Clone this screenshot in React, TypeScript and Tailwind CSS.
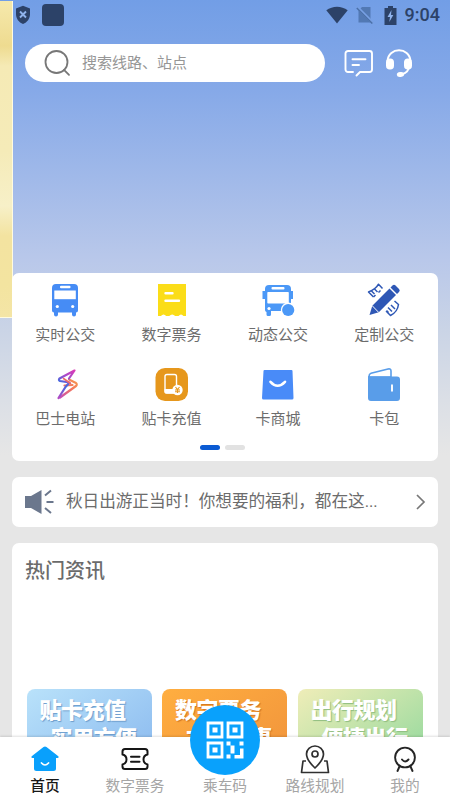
import React from "react";

const sans = "font-['Roboto','Noto_Sans_CJK_SC',sans-serif]";

function StatusBar() {
  return (
    <div className="flex h-[30px] items-center pl-[15px] pr-[10px] text-[#2c4268]">
      <svg width="16" height="20" viewBox="0 0 16 20">
        <path d="M8 .8 15 3.5V9c0 4.800-2.800 8.300-7 10-4.200-1.700-7-5.200-7-10V3.500Z" fill="currentColor" />
        <path d="m5 6.500 6 6m0-6-6 6" stroke="#8fb3ec" strokeWidth="1.900" />
      </svg>
      <div className="ml-[11px] h-[22px] w-[22px] rounded-[4px] bg-[#2c4268]" />
      <div className="ml-auto flex items-center">
        <svg width="22" height="18" viewBox="0 0 22 18">
          <path d="M.3 4.300C6.600-.6 15.400-.6 21.700 4.300L11 17.500Z" fill="currentColor" />
        </svg>
        <svg className="ml-[8px]" width="18" height="18" viewBox="0 0 18 18">
          <path d="M6 1H14.500v15.500H2.500V4.500Z" fill="#5279b4" />
          <path d="m1 1 16 16" stroke="#77a0e4" strokeWidth="3" />
          <path d="m.8 2 15.500 15.500" stroke="#4b70a8" strokeWidth="1.500" />
        </svg>
        <svg className="ml-[10px]" width="13" height="19" viewBox="0 0 13 19">
          <path d="M4 0h5v2h3.500v17H.5V2H4Z" fill="currentColor" />
          <path d="M7.500 4 3.500 11H6l-.7 5 4-7H7Z" fill="#8fb3ec" />
        </svg>
        <span className="ml-[8px] text-[18px] font-medium leading-[30px]">9:04</span>
      </div>
    </div>
  );
}

function SearchRow() {
  return (
    <div className="mt-[14px] flex items-center pl-[25px]">
      <div className="flex h-[38px] w-[300px] items-center rounded-full bg-white pl-[19px]">
        <svg width="27" height="27" viewBox="0 0 27 27" fill="none" stroke="#777" strokeWidth="1.800">
          <circle cx="12.500" cy="12" r="11" />
          <path d="m20 19.800 5 5" strokeLinecap="round" />
        </svg>
        <span className="ml-[11px] text-[15px] leading-[20px] text-[#969696]">搜索线路、站点</span>
      </div>
      <svg className="ml-[19px]" width="30" height="28" viewBox="0 0 30 28" fill="none" stroke="#fff" strokeWidth="1.900" strokeLinecap="round" strokeLinejoin="round">
        <path d="M9 23H4a2.500 2.500 0 0 1-2.500-2.500v-16A2.500 2.500 0 0 1 4 2h21.500A2.500 2.500 0 0 1 28 4.500v16a2.500 2.500 0 0 1-2.500 2.500h-9.500L12.500 26.500M8.500 10.300h13M8.500 16h6.500" />
      </svg>
      <svg className="ml-[11px]" width="28" height="29" viewBox="0 0 28 29">
        <path d="M2.500 12C3.500-2.200 24.500-2.200 25.500 12M24 17c0 5-3.500 7.500-8 8.500" fill="none" stroke="#fff" strokeWidth="2" />
        <rect x="1" y="9.500" width="8" height="11" rx="3.800" fill="#fff" />
        <rect x="19" y="9.500" width="8" height="11" rx="3.800" fill="#fff" />
        <ellipse cx="15.500" cy="25.500" rx="3.700" ry="2.400" transform="rotate(-8 15.500 25.500)" fill="#fff" />
      </svg>
    </div>
  );
}

const BusIcon = () => (
  <svg width="34" height="34" viewBox="0 0 34 34" fill="#468cf5">
    <path d="M8 1h18a4 4 0 0 1 4 4v22.500a2 2 0 0 1-2 2v2a2 2 0 0 1-4 0v-2H10v2a2 2 0 0 1-4 0v-2a2 2 0 0 1-2-2V5a4 4 0 0 1 4-4Z" />
    <rect x="12" y="2.800" width="10.500" height="2.500" rx="1" fill="#fff" />
    <rect x="6.300" y="7.500" width="21.500" height="8.700" fill="#fff" />
    <circle cx="9.300" cy="23.500" r="1.600" fill="#fff" />
    <circle cx="24.700" cy="23.500" r="1.600" fill="#fff" />
  </svg>
);

const TicketIcon = () => (
  <svg width="34" height="34" viewBox="0 0 34 34">
    <path d="M3 1h28v32h-2.500q-2.500-3-5 0h-3.300q-3-3-6 0h-3q-2.700-3-5.300 0H3Z" fill="#fbdd18" />
    <path d="M10.500 10.300h7M10.500 17.800h13.500" stroke="#fff" strokeWidth="2.400" strokeLinecap="round" />
  </svg>
);

const LiveBusIcon = () => (
  <svg width="34" height="34" viewBox="0 0 34 34" fill="#4b98f7">
    <path d="M8 2h18q4 0 4 4v2h2v8h-2v12H10v3.500a1.500 1.500 0 0 1-1.500 1.500H7a1.500 1.500 0 0 1-1.500-1.500V29A2 2 0 0 1 4 27V16H1.500V8H4V6q0-4 4-4Z" />
    <rect x="10.500" y="4" width="13" height="2.500" rx="1" fill="#fff" />
    <rect x="6.300" y="9" width="21.500" height="11.500" rx=".8" fill="#fff" />
    <circle cx="8" cy="25.500" r="1.600" fill="#fff" />
    <circle cx="27.200" cy="27" r="7.400" fill="#fff" />
    <circle cx="27.200" cy="27" r="6.100" />
  </svg>
);

const PencilIcon = () => (
  <svg width="34" height="34" viewBox="0 0 34 34" fill="none" stroke="#2e57b5" strokeWidth="1.500" strokeLinejoin="round">
    <path d="M6.500 14 1.500 9Q9 6 11.500 1.200L15.500 5.500M7 5.500l3.500 3.500M4.500 8l3 3" />
    <path d="M6.500 14l2-2M11.500 9.500l2-2" />
    <path d="m27.500 18 4 3.500q-1 7.500-8 11L19 28M21 24.500l4 4M24 22l4 4M21.500 29.500l-2-2" />
    <path d="M22.500 5.500 29 12 11.800 29.200 2.500 32l2.800-9.300Z" fill="#2e57b5" stroke="none" />
    <path d="m23.500 4.500 2-2Q27 1 28.500 2.500l3.500 3.500q1.500 1.500 0 3l-2 2Z" fill="#2e57b5" stroke="none" />
    <path d="m5 22.500 6.800 7" stroke="#fff" strokeWidth="1" />
  </svg>
);

const BoltIcon = () => (
  <svg width="34" height="34" viewBox="0 0 34 34" fill="none" strokeWidth="2.200" strokeLinejoin="round" strokeLinecap="round">
    <defs>
      <linearGradient id="bolt" gradientUnits="userSpaceOnUse" x1="26" y1="3" x2="11" y2="31">
        <stop offset="0" stopColor="#dc3ab5" /><stop offset=".3" stopColor="#a34ccc" /><stop offset=".55" stopColor="#3f6ae0" /><stop offset="1" stopColor="#b14ac4" />
      </linearGradient>
      <linearGradient id="spark" gradientUnits="userSpaceOnUse" x1="13" y1="30" x2="28" y2="15">
        <stop stopColor="#c750b4" /><stop offset=".6" stopColor="#f2745f" /><stop offset="1" stopColor="#f69151" />
      </linearGradient>
    </defs>
    <path d="m16.500 18.500 8-.5M21 12.500l7 3.500q1.500 1.300 0 3L12 30.500" stroke="url(#spark)" />
    <path d="M21 11.500 26.500 3.500 11.500 11.500q-1.300 1.800.5 2.500l9.500 1.500-4 4.500-7 11" stroke="url(#bolt)" />
    <path d="m15.500 11.500 7 5" stroke="#ec6a6c" strokeWidth="1.600" />
  </svg>
);

const TopUpIcon = () => (
  <svg width="34" height="34" viewBox="0 0 34 34">
    <rect x=".5" y="1" width="32.500" height="33" rx="9.500" fill="#e6971c" />
    <rect x="10" y="7.500" width="11.500" height="18.500" rx="2" fill="none" stroke="#fff" strokeWidth="1.400" />
    <path d="M9.500 22H21V26.500H11q-1.500 0-1.500-1.500Z" fill="#fff" />
    <circle cx="22.500" cy="23" r="5.200" fill="#fff" />
    <path d="m20.500 20 2 2.500 2-2.500M20 23h5m-5 1.700h5M22.500 22.500v3.500" fill="none" stroke="#e6971c" strokeWidth="1.100" />
  </svg>
);

const BagIcon = () => (
  <svg width="34" height="34" viewBox="0 0 34 34">
    <path d="M3.500 3h27q1 0 1 1l1 27q0 1.500-1.500 1.500H2.500Q1 32.500 1 31L2.500 4q0-1 1-1Z" fill="#498bf8" />
    <path d="M9.500 14.800q7 7.800 14.500 0" fill="none" stroke="#fff" strokeWidth="2.600" strokeLinecap="round" />
  </svg>
);

const WalletIcon = () => (
  <svg width="34" height="34" viewBox="0 0 34 34">
    <path d="M2 12V9.500Q2 7 4 6.300L21 2q3-.7 3 2v6H2Z" fill="#fff" stroke="#599de9" strokeWidth="1.600" />
    <path d="M1 9q1 .5 3 .5h26q3 0 3 3V31q0 3-3 3H4q-3 0-3-3Z" fill="#599de9" />
    <path d="M25 18.300v5.500" stroke="#fff" strokeWidth="1.900" strokeLinecap="round" />
  </svg>
);

const services = [
  { label: "实时公交", icon: <BusIcon /> },
  { label: "数字票务", icon: <TicketIcon /> },
  { label: "动态公交", icon: <LiveBusIcon /> },
  { label: "定制公交", icon: <PencilIcon /> },
  { label: "巴士电站", icon: <BoltIcon /> },
  { label: "贴卡充值", icon: <TopUpIcon /> },
  { label: "卡商城", icon: <BagIcon /> },
  { label: "卡包", icon: <WalletIcon /> },
];

function Services() {
  return (
    <section className="h-[188px] rounded-[7px] bg-white pt-[10px]">
      <div className="grid grid-cols-4 gap-y-[14px]">
        {services.map((s) => (
          <div key={s.label} className="flex h-[70px] flex-col items-center">
            {s.icon}
            <span className="mt-[7px] text-[15px] leading-[22px] text-[#6c6c6c]">{s.label}</span>
          </div>
        ))}
      </div>
      <div className="mt-[8px] flex justify-center gap-[5px] pr-[5px]">
        <i className="h-[5px] w-[20px] rounded-full bg-[#0b5bd3]" />
        <i className="h-[5px] w-[20px] rounded-full bg-[#e2e2e2]" />
      </div>
    </section>
  );
}

function Notice() {
  return (
    <section className="mt-[16px] flex h-[50px] items-center rounded-[7px] bg-white pl-[12px] pr-[12px]">
      <svg width="30" height="26" viewBox="0 0 30 26">
        <path d="M1 7h6l10.500-6v24L7 19H1Z" fill="#6b778d" />
        <path d="m21 6.500 6-5M22.500 13h7M21 19l6 5" stroke="#6b778d" strokeWidth="2" />
      </svg>
      <span className="ml-[12px] whitespace-nowrap text-[16.650px] leading-[24px] tracking-[-0.050px] text-[#6c6c6c]">秋日出游正当时！你想要的福利，都在这...</span>
      <svg className="ml-auto" width="11" height="16" viewBox="0 0 11 16" fill="none" stroke="#777" strokeWidth="1.700">
        <path d="m2 1 7 7-7 7" />
      </svg>
    </section>
  );
}

const banners = [
  { title: "贴卡充值", sub: "实用方便", tone: "from-[#b9e2fa] to-[#86b5ed] [text-shadow:1px_1px_1px_#6d9dcc]" },
  { title: "数字票务", sub: "方便实惠", tone: "from-[#ffae40] to-[#ef913b] [text-shadow:1px_1px_1px_#d27824]" },
  { title: "出行规划", sub: "便捷出行", tone: "from-[#efedb8] to-[#86d69a] [text-shadow:1px_1px_1px_#8fbd80]" },
];

function News() {
  return (
    <section className="mt-[16px] h-[257px] overflow-hidden rounded-t-[7px] bg-white">
      <h2 className="pl-[13px] pt-[13px] text-[20px] font-medium leading-[30px] text-[#6b6b6b]">热门资讯</h2>
      <div className="mt-[103px] flex gap-[10.500px] pl-[14.500px]">
        {banners.map((b) => (
          <div key={b.title} className={"h-[90px] w-[125px] shrink-0 rounded-[8px] bg-gradient-to-br pl-[13px] pt-[8px] text-[22px] font-black leading-[28px] text-white " + b.tone}>
            <div className="whitespace-nowrap tracking-[-0.500px]">{b.title}</div>
            <div className="whitespace-nowrap pl-[11px] tracking-[-0.500px]">{b.sub}</div>
          </div>
        ))}
      </div>
    </section>
  );
}

const HomeIcon = () => (
  <svg width="30" height="28" viewBox="0 0 30 28">
    <path d="M13.500 1q1.500-1.200 3 0L28 10q1.500 1.600-.6 2H26v10.500q0 2.500-2.500 2.500h-17Q4 25 4 22.500V12H2.600Q.5 11.600 2 10Z" fill="#09a0fc" />
    <path d="M11.500 17q3.500 4 7 0" fill="none" stroke="#fff" strokeWidth="1.700" strokeLinecap="round" />
  </svg>
);

const CouponIcon = () => (
  <svg width="30" height="28" viewBox="0 0 30 28" fill="none" stroke="#161616" strokeWidth="2" strokeLinejoin="round" strokeLinecap="round">
    <path d="M5 3h20q2.500 0 2.500 2.500v3q-4 1-4 5t4 5v2q0 2.500-2.500 2.500H5Q2.500 23 2.500 20.500v-2q4-1 4-5t-4-5v-3Q2.500 3 5 3ZM11 10.800h8.500M11 15.800h8.500" />
  </svg>
);

const RouteIcon = () => (
  <svg width="30" height="30" viewBox="0 0 30 30" fill="none" stroke="#303030" strokeWidth="1.700" strokeLinejoin="round">
    <path d="M15 23q-8.500-8-8.500-14a8.500 8 0 0 1 17 0Q23.500 15 15 23Z" />
    <circle cx="15" cy="9" r="3" />
    <path d="M6 16H3L1.500 27.500h27L27 16h-3" />
  </svg>
);

const ProfileIcon = () => (
  <svg width="30" height="28" viewBox="0 0 30 28" fill="none" stroke="#252525" strokeWidth="1.900" strokeLinecap="round">
    <circle cx="15" cy="11.500" r="9.900" />
    <path d="M12 13.500q3 4 6.500 0M9.500 20.500 7.500 25M20.500 20.500l2 4.500" />
  </svg>
);

function QrCode() {
  return (
    <svg width="38" height="38" viewBox="0 0 38 38" fill="none" stroke="#fff" strokeWidth="2.800">
      <path d="M2 2h14v14H2ZM22 2h14v14H22ZM2 22h14v14H2Z" />
      <path d="M6.500 6.500h5v5h-5ZM26.500 6.500h5v5h-5ZM6.500 26.500h5v5h-5Z" fill="#fff" stroke="none" />
      <path d="M20.500 20.500h4v4h-4ZM33.500 20.500h4v4h-4ZM20.500 33.500h4v4h-4ZM24.500 24.500h4v8h-4ZM34 27.500h3.500v10h-9V34H34Z" fill="#fff" stroke="none" />
    </svg>
  );
}

const tabs = [
  { label: "首页", icon: <HomeIcon />, color: "text-[#171717] font-medium" },
  { label: "数字票务", icon: <CouponIcon />, color: "text-[#a5a5a5]" },
  { label: "乘车码", icon: null, color: "text-[#a5a5a5]" },
  { label: "路线规划", icon: <RouteIcon />, color: "text-[#a5a5a5]" },
  { label: "我的", icon: <ProfileIcon />, color: "text-[#a5a5a5]" },
];

function TabBar() {
  return (
    <nav className="absolute inset-x-0 bottom-0 h-[63px] bg-white shadow-[0_-1px_2px_rgba(0,0,0,0.12)]">
      <div className="absolute left-[190px] top-[-32px] flex h-[70px] w-[70px] items-center justify-center rounded-full bg-[#09a1fc]">
        <QrCode />
      </div>
      <div className="grid h-full grid-cols-5">
        {tabs.map((t) => (
          <div key={t.label} className="flex flex-col items-center pt-[7px]">
            <div className="flex h-[31px] items-center">{t.icon}</div>
            <span className={"relative text-[14.700px] leading-[22px] " + t.color}>{t.label}</span>
          </div>
        ))}
      </div>
    </nav>
  );
}

export default function App() {
  return (
    <div className={"relative h-[800px] w-[450px] overflow-hidden bg-[#e6e6e6] bg-[linear-gradient(180deg,#729ee6_0px,#86a9e8_90px,#b9c8ea_260px,#cad4e6_330px,#dbdfe6_400px,#e6e6e6_455px)] " + sans}>
      <div className="absolute left-0 top-[1px] h-[317px] w-[13px] border-r border-b border-[#fffbe0] bg-[linear-gradient(180deg,#f6e9ac_0px,#eedb90_45px,#f5eab5_65px,#f5ebb8_150px,#f7f0c8_205px,#f3e3a0_235px,#f3e4a0_285px,#f4e5a6_317px)]" />
      <StatusBar />
      <SearchRow />
      <main className="relative ml-[12px] mr-[12.500px] mt-[190.500px]">
        <Services />
        <Notice />
        <News />
      </main>
      <TabBar />
    </div>
  );
}
